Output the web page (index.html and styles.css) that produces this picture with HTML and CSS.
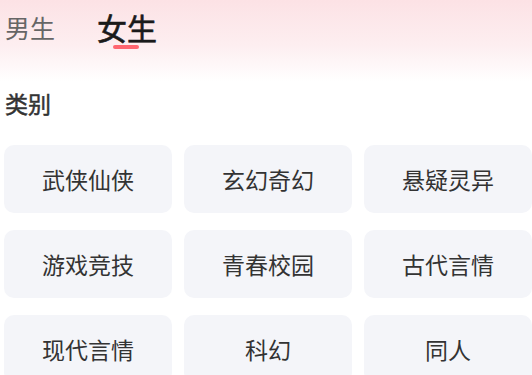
FILE: index.html
```html
<!DOCTYPE html>
<html lang="zh-CN">
<head>
  <meta charset="UTF-8" />
  <meta name="viewport" content="width=device-width, initial-scale=1.0"/>
  <title>分类</title>
  <link rel="stylesheet" href="styles.css">
</head>
<body>

  <div class="header">
    <div class="tab">男生</div>
    <div class="tab active">女生</div>
  </div>

  <div class="section-title">类别</div>

  <div class="grid">
    <div class="item">武侠仙侠</div>
    <div class="item">玄幻奇幻</div>
    <div class="item">悬疑灵异</div>
    <div class="item">游戏竞技</div>
    <div class="item">青春校园</div>
    <div class="item">古代言情</div>
    <div class="item">现代言情</div>
    <div class="item">科幻</div>
    <div class="item">同人</div>
  </div>

</body>
</html>
```

FILE: styles.css
```css
body {
  font-family: "Noto Sans CJK SC", "Noto Sans", sans-serif;
  margin: 0;
  padding: 0;
  background: #ffffff;
  color: #333;
}

.header {
  display: flex;
  align-items: flex-start;
  gap: 42px;
  height: 82px;
  padding: 7px 5px 0;
  box-sizing: border-box;
  background: linear-gradient(180deg, #fce2e5 0%, #fdeef0 55%, #ffffff 100%);
}

.tab {
  font-size: 25px;
  line-height: 40px;
  color: #666;
  position: relative;
}

.tab.active {
  font-size: 30px;
  color: #1a1a1a;
  -webkit-text-stroke: 0.6px #1a1a1a;
}

.tab.active::after {
  content: "";
  position: absolute;
  left: 16px;
  top: 38px;
  width: 26px;
  height: 4px;
  border-radius: 2px;
  background: #ff6670;
}

.section-title {
  font-size: 23px;
  color: #333;
  -webkit-text-stroke: 0.5px #333;
  padding: 5px 5px 0;
  line-height: 32px;
}

.grid {
  display: grid;
  grid-template-columns: repeat(3, 168px);
  column-gap: 12px;
  row-gap: 17px;
  padding: 26px 0 0 4px;
}

.item {
  height: 68px;
  background: #f4f5f9;
  border-radius: 10px;
  display: flex;
  align-items: center;
  justify-content: center;
  font-size: 23px;
  color: #333;
}
```
